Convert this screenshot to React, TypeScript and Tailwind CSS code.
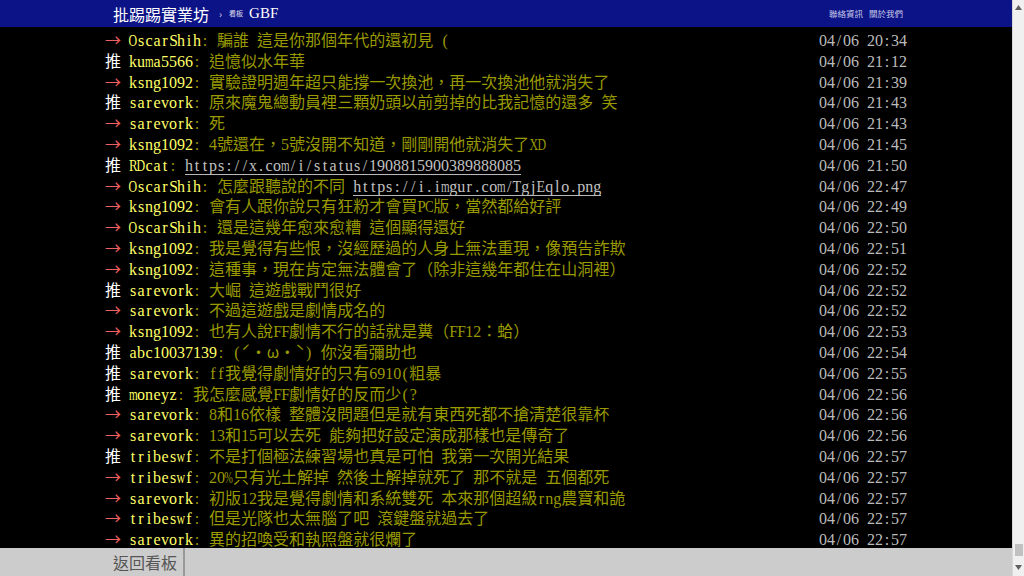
import React from "react";

type Row = { tag: "推" | "→"; id: string; text: string; time: string; link?: string; before?: string };

const rows: Row[] = [
  { tag: "→", id: "OscarShih", text: "騙誰 這是你那個年代的還初見 (", time: "04/06 20:34" },
  { tag: "推", id: "kuma5566", text: "追憶似水年華", time: "04/06 21:12" },
  { tag: "→", id: "ksng1092", text: "實驗證明週年超只能撐一次換池，再一次換池他就消失了", time: "04/06 21:39" },
  { tag: "推", id: "sarevork", text: "原來魔鬼總動員裡三顆奶頭以前剪掉的比我記憶的還多 笑", time: "04/06 21:43" },
  { tag: "→", id: "sarevork", text: "死", time: "04/06 21:43" },
  { tag: "→", id: "ksng1092", text: "4號還在，5號沒開不知道，剛剛開他就消失了XD", time: "04/06 21:45" },
  { tag: "推", id: "RDcat", text: "", link: "https://x.com/i/status/1908815900389888085", time: "04/06 21:50" },
  { tag: "→", id: "OscarShih", text: "", before: "怎麼跟聽說的不同 ", link: "https://i.imgur.com/TgjEqlo.png", time: "04/06 22:47" },
  { tag: "→", id: "ksng1092", text: "會有人跟你說只有狂粉才會買PC版，當然都給好評", time: "04/06 22:49" },
  { tag: "→", id: "OscarShih", text: "還是這幾年愈來愈糟 這個顯得還好", time: "04/06 22:50" },
  { tag: "→", id: "ksng1092", text: "我是覺得有些恨，沒經歷過的人身上無法重現，像預告詐欺", time: "04/06 22:51" },
  { tag: "→", id: "ksng1092", text: "這種事，現在肯定無法體會了（除非這幾年都住在山洞裡）", time: "04/06 22:52" },
  { tag: "推", id: "sarevork", text: "大崛 這遊戲戰鬥很好", time: "04/06 22:52" },
  { tag: "→", id: "sarevork", text: "不過這遊戲是劇情成名的", time: "04/06 22:52" },
  { tag: "→", id: "ksng1092", text: "也有人說FF劇情不行的話就是糞（FF12：蛤）", time: "04/06 22:53" },
  { tag: "推", id: "abc10037139", text: "(ˊ・ω・ˋ) 你沒看彌助也", time: "04/06 22:54" },
  { tag: "推", id: "sarevork", text: "ff我覺得劇情好的只有6910(粗暴", time: "04/06 22:55" },
  { tag: "推", id: "moneyz", text: "我怎麼感覺FF劇情好的反而少(?", time: "04/06 22:56" },
  { tag: "→", id: "sarevork", text: "8和16依樣 整體沒問題但是就有東西死都不搶清楚很靠杯", time: "04/06 22:56" },
  { tag: "→", id: "sarevork", text: "13和15可以去死 能夠把好設定演成那樣也是傳奇了", time: "04/06 22:56" },
  { tag: "推", id: "tribeswf", text: "不是打個極法練習場也真是可怕 我第一次開光結果", time: "04/06 22:57" },
  { tag: "→", id: "tribeswf", text: "20%只有光土解掉 然後土解掉就死了 那不就是 五個都死", time: "04/06 22:57" },
  { tag: "→", id: "sarevork", text: "初版12我是覺得劇情和系統雙死 本來那個超級rng農寶和詭", time: "04/06 22:57" },
  { tag: "→", id: "tribeswf", text: "但是光隊也太無腦了吧 滾鍵盤就過去了", time: "04/06 22:57" },
  { tag: "→", id: "sarevork", text: "異的招喚受和執照盤就很爛了", time: "04/06 22:57" },
];

// Times-metric advance widths (per 1000 em) for glyphs wider than a half-width cell
const wide: Record<string, number> = {
  m: 778, w: 722, A: 722, B: 667, C: 667, D: 722, E: 611, F: 556, G: 722, H: 722, K: 722,
  L: 611, M: 889, N: 722, O: 722, P: 556, Q: 722, R: 667, S: 556, T: 611, U: 722, V: 722,
  W: 944, X: 722, Y: 722, Z: 611, "%": 833, "@": 921, "&": 778,
};

function Cell({ ch, link }: { ch: string; link?: boolean }) {
  const border = link ? " border-b border-[#b8b8b8]" : "";
  if (ch === " ") return <span className={"inline-block h-[15px] w-[8px] align-baseline" + border} />;
  const w = wide[ch];
  const scale = w ? Math.min(1, 8.6 / ((w * 16) / 1000)) : 1;
  return (
    <span className={"inline-flex w-[8px] justify-center leading-none" + border}>
      <span className="inline-block whitespace-pre" style={scale < 1 ? { transform: `scaleX(${scale})` } : undefined}>
        {ch}
      </span>
    </span>
  );
}

function Txt({ s, link }: { s: string; link?: boolean }) {
  return (
    <>
      {Array.from(s).map((ch, i) =>
        ch.charCodeAt(0) < 128 ? (
          <span key={i} className="font-['Liberation_Serif',serif]">
            <Cell ch={ch} link={link} />
          </span>
        ) : (
          <span key={i} className={link ? "border-b border-[#b8b8b8]" : ""}>
            {ch}
          </span>
        )
      )}
    </>
  );
}

export default function App() {
  return (
    <div className="flex h-[576px] w-[1024px] overflow-hidden bg-black font-['Noto_Sans_CJK_TC',sans-serif]">
      <div className="flex min-w-0 flex-1 flex-col">
        {/* top bar */}
        <div className="flex h-[27px] shrink-0 items-center bg-[#0c1387]">
          <div className="ml-[105px] flex w-[802px] items-center pl-[8px] pr-[4px]">
            <span className="text-[16px] leading-none text-white">批踢踢實業坊</span>
            <span className="ml-[10px] text-[10px] leading-none text-[#d8d8f0]">›</span>
            <span className="ml-[7px] text-[7px] leading-none text-[#e0e0f0]">看板</span>
            <span className="ml-[6px] font-['Liberation_Serif',serif] text-[15px] leading-none text-white">GBF</span>
            <div className="ml-auto flex gap-[6px] text-[8.5px] leading-none text-[#c8c8e8]">
              <span>聯絡資訊</span>
              <span>關於我們</span>
            </div>
          </div>
        </div>

        {/* pushes */}
        <div className="min-h-0 flex-1 overflow-hidden pt-[2px]">
          <div className="ml-[105px] w-[802px]">
            {rows.map((r, i) => (
              <div key={i} className="flex h-[20.8px] items-baseline justify-between whitespace-pre text-[16px] leading-[20.8px]">
                <div className="flex items-baseline">
                  <span className={"inline-block w-[24px] " + (r.tag === "推" ? "text-white" : "text-[#f06060]")}>{r.tag}</span>
                  <span className="text-[#ffff66]">
                    <Txt s={r.id} />
                  </span>
                  <span className="text-[#999900]">
                    <Txt s={": "} />
                    {r.before && <Txt s={r.before} />}
                    {r.text && <Txt s={r.text} />}
                  </span>
                  {r.link && (
                    <span className="text-[#c0c0c0]">
                      <Txt s={r.link} link />
                    </span>
                  )}
                </div>
                <span className="text-[#bbbbbb]">
                  <Txt s={r.time} />
                </span>
              </div>
            ))}
          </div>
        </div>

        {/* bottom bar */}
        <div className="flex h-[28px] shrink-0 bg-[#cccccc]">
          <div className="ml-[105px] flex items-center border-r-2 border-[#999999] pl-[8px] pr-[6px]">
            <span className="text-[16px] leading-none text-[#555555]">返回看板</span>
          </div>
        </div>
      </div>

      {/* scrollbar */}
      <div className="flex w-[12px] shrink-0 flex-col items-center border-l border-[#d8d8d8] bg-[#f0f0f0]">
        <svg width="7" height="5" viewBox="0 0 7 5" className="mt-[5px]">
          <polygon points="3.5,0 7,5 0,5" fill="#606060" />
        </svg>
        <div className="flex-1" />
        <div className="mb-[9px] h-[12px] w-[8px] bg-[#c1c1c1]" />
        <svg width="7" height="5" viewBox="0 0 7 5" className="mb-[6px]">
          <polygon points="0,0 7,0 3.5,5" fill="#606060" />
        </svg>
      </div>
    </div>
  );
}
